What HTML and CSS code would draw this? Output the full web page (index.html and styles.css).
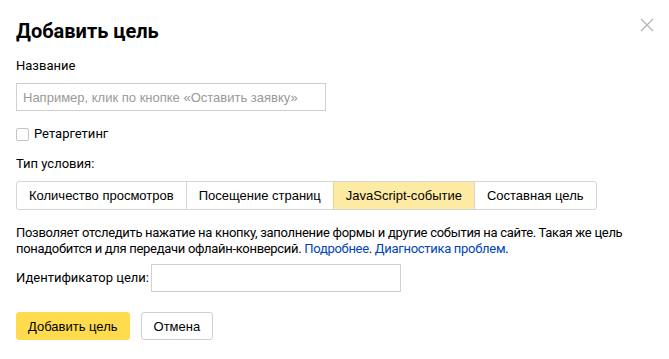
FILE: index.html
```html
<!DOCTYPE html>
<html lang="ru">
<head>
    <meta charset="UTF-8">
    <title>Добавить цель</title>
    <link rel="stylesheet" href="styles.css">
</head>
<body>
    <div class="dialog">
        <button class="close" aria-label="Закрыть">
            <svg width="14" height="14" viewBox="0 0 14 14"><path d="M1 1L13 13M13 1L1 13" stroke="#b3b3b3" stroke-width="1.3" fill="none"/></svg>
        </button>
        <h1>Добавить цель</h1>

        <div class="field">
            <label class="label">Название</label>
            <input class="input name-input" type="text" placeholder="Например, клик по кнопке «Оставить заявку»">
        </div>

        <label class="check">
            <span class="box"></span> Ретаргетинг
        </label>

        <div class="field">
            <span class="label">Тип условия:</span>
            <div class="tabs">
                <span class="tab">Количество просмотров</span>
                <span class="tab">Посещение страниц</span>
                <span class="tab active">JavaScript-событие</span>
                <span class="tab">Составная цель</span>
            </div>
        </div>

        <p class="hint">Позволяет отследить нажатие на кнопку, заполнение формы и другие события на сайте. Такая же цель<br>понадобится и для передачи офлайн-конверсий. <a href="#">Подробнее</a>. <a href="#">Диагностика проблем</a>.</p>

        <div class="id-row">
            <span class="label">Идентификатор цели:</span>
            <input class="input id-input" type="text">
        </div>

        <div class="actions">
            <button class="btn primary">Добавить цель</button>
            <button class="btn">Отмена</button>
        </div>
    </div>
</body>
</html>
```

FILE: styles.css
```css
body {
    margin: 0;
    background: #fff;
    color: #000;
    font-family: Roboto, Arial, sans-serif;
    font-size: 13px;
}
.dialog {
    position: relative;
    padding: 17px 16px 0;
}
h1 {
    margin: 0 0 13px;
    font-family: Roboto, sans-serif;
    font-size: 20px;
    font-weight: 700;
    line-height: 28px;
}
.close {
    position: absolute;
    top: 18px;
    right: 15px;
    padding: 0;
    border: none;
    background: none;
}
.field {
    display: flex;
    flex-direction: column;
    align-items: flex-start;
    gap: 9px;
}
.label {
    line-height: 16px;
}
.input {
    box-sizing: border-box;
    height: 28px;
    padding: 0 6px;
    border: 1px solid #d0d0d0;
    font-family: "Liberation Sans", Arial, sans-serif;
    font-size: 13px;
    outline: none;
}
.input::placeholder {
    color: #999;
}
.name-input {
    width: 310px;
}
.check {
    display: flex;
    align-items: center;
    gap: 5px;
    margin: 15px 0 14px;
    line-height: 16px;
}
.box {
    box-sizing: border-box;
    width: 13px;
    height: 13px;
    border: 1px solid #c4c4c4;
    border-radius: 2px;
}
.tabs {
    display: flex;
    border: 1px solid #d6d6d6;
    border-radius: 3px;
}
.tab {
    height: 27px;
    padding: 0 12px;
    display: flex;
    align-items: center;
    font-family: "Liberation Sans", Arial, sans-serif;
    font-size: 13px;
    border-left: 1px solid #d6d6d6;
}
.tab:first-child {
    border-left: none;
}
.tab.active {
    background: #feeba3;
    border-color: #e8d48a;
}
.hint {
    margin: 15px 0 7px;
    line-height: 16px;
    letter-spacing: -0.3px;
    white-space: nowrap;
}
.hint a {
    color: #04b;
    text-decoration: none;
}
.id-row {
    display: flex;
    align-items: center;
    gap: 2px;
}
.id-input {
    width: 250px;
}
.actions {
    display: flex;
    gap: 11px;
    margin-top: 20px;
}
.btn {
    height: 28px;
    padding: 0 12px;
    border: 1px solid #d0d0d0;
    border-radius: 3px;
    background: #fff;
    font-family: "Liberation Sans", Arial, sans-serif;
    font-size: 13px;
    color: #000;
}
.btn.primary {
    padding: 0 11px;
    background: #ffdb4d;
    border-color: #ffdb4d;
}
```
